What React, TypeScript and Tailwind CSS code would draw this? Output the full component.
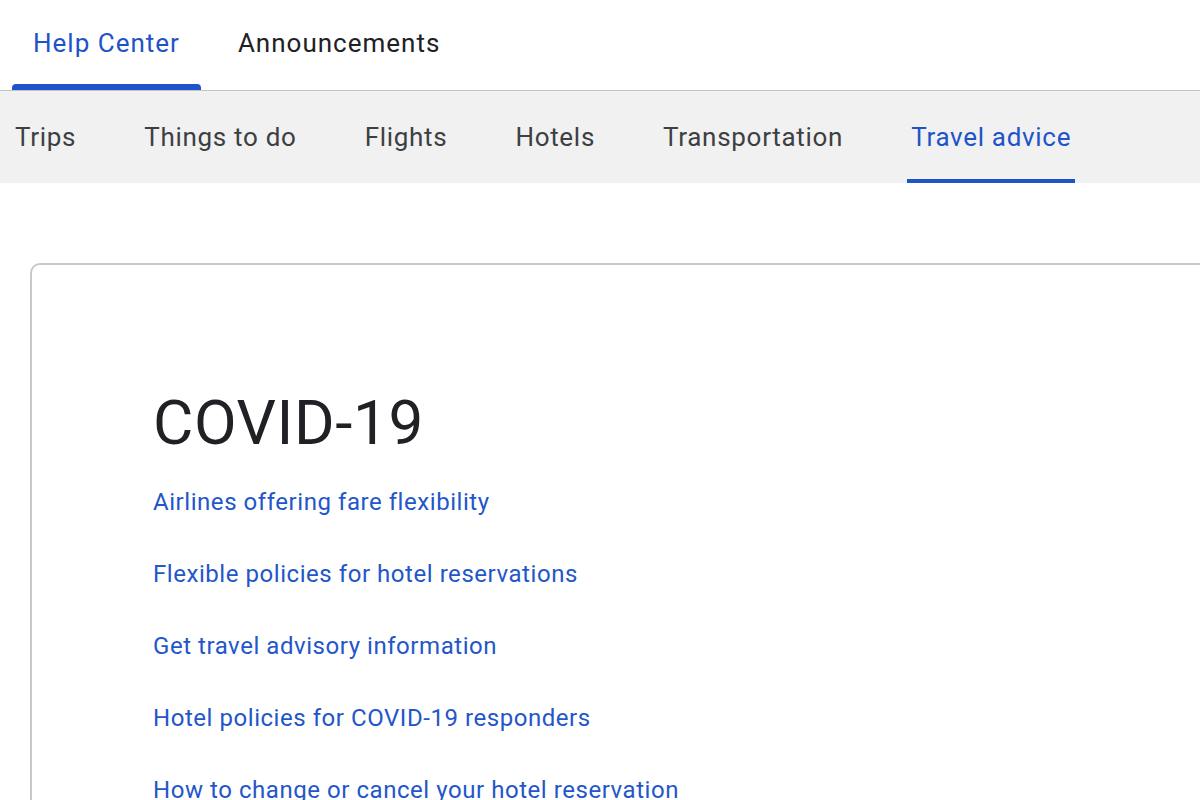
import React from "react";

export default function App() {
  const subTabs = ["Trips", "Things to do", "Flights", "Hotels", "Transportation", "Travel advice"];
  const links = [
    "Airlines offering fare flexibility",
    "Flexible policies for hotel reservations",
    "Get travel advisory information",
    "Hotel policies for COVID-19 responders",
    "How to change or cancel your hotel reservation",
  ];
  return (
    <div className="w-[1200px] h-[800px] overflow-hidden bg-white font-['Roboto',Arial,sans-serif]">
      <div className="h-[91px] border-b border-[#c4c4c4] flex items-stretch pl-[12px]">
        <div className="relative flex items-center px-[21px] pb-[4px] text-[26px] tracking-[1px] text-[#1f53c9]">
          Help Center
          <div className="absolute left-0 right-0 bottom-0 h-[6px] rounded-t-[4px] bg-[#1f53c9]" />
        </div>
        <div className="flex items-center pl-[37px] pb-[4px] text-[26px] tracking-[1px] text-[#202124]">
          Announcements
        </div>
      </div>
      <div className="h-[92px] bg-[#f1f1f1] flex items-stretch pl-[11px] gap-[60px]">
        {subTabs.map((t, i) => {
          const active = i === subTabs.length - 1;
          return (
            <div
              key={t}
              className={`relative flex items-center px-[4px] text-[26px] tracking-[0.7px] ${
                active ? "text-[#1f53c9]" : "text-[#3c4043]"
              }`}
            >
              {t}
              {active && <div className="absolute left-0 right-0 bottom-0 h-[4px] bg-[#1f53c9]" />}
            </div>
          );
        })}
      </div>
      <div className="pt-[80px] pl-[30px]">
        <div className="w-[1300px] h-[700px] rounded-[10px] border-2 border-[#c8c8c8] pl-[121px] pt-[118px]">
          <h1 className="text-[62px] leading-[80px] text-[#202124] tracking-[0.6px]">COVID-19</h1>
          <div className="flex flex-col mt-[3px]">
            {links.map((l) => (
              <div key={l} className="h-[72px] flex items-center text-[24px] tracking-[0.55px] text-[#2356c9] whitespace-nowrap">
                {l}
              </div>
            ))}
          </div>
        </div>
      </div>
    </div>
  );
}
